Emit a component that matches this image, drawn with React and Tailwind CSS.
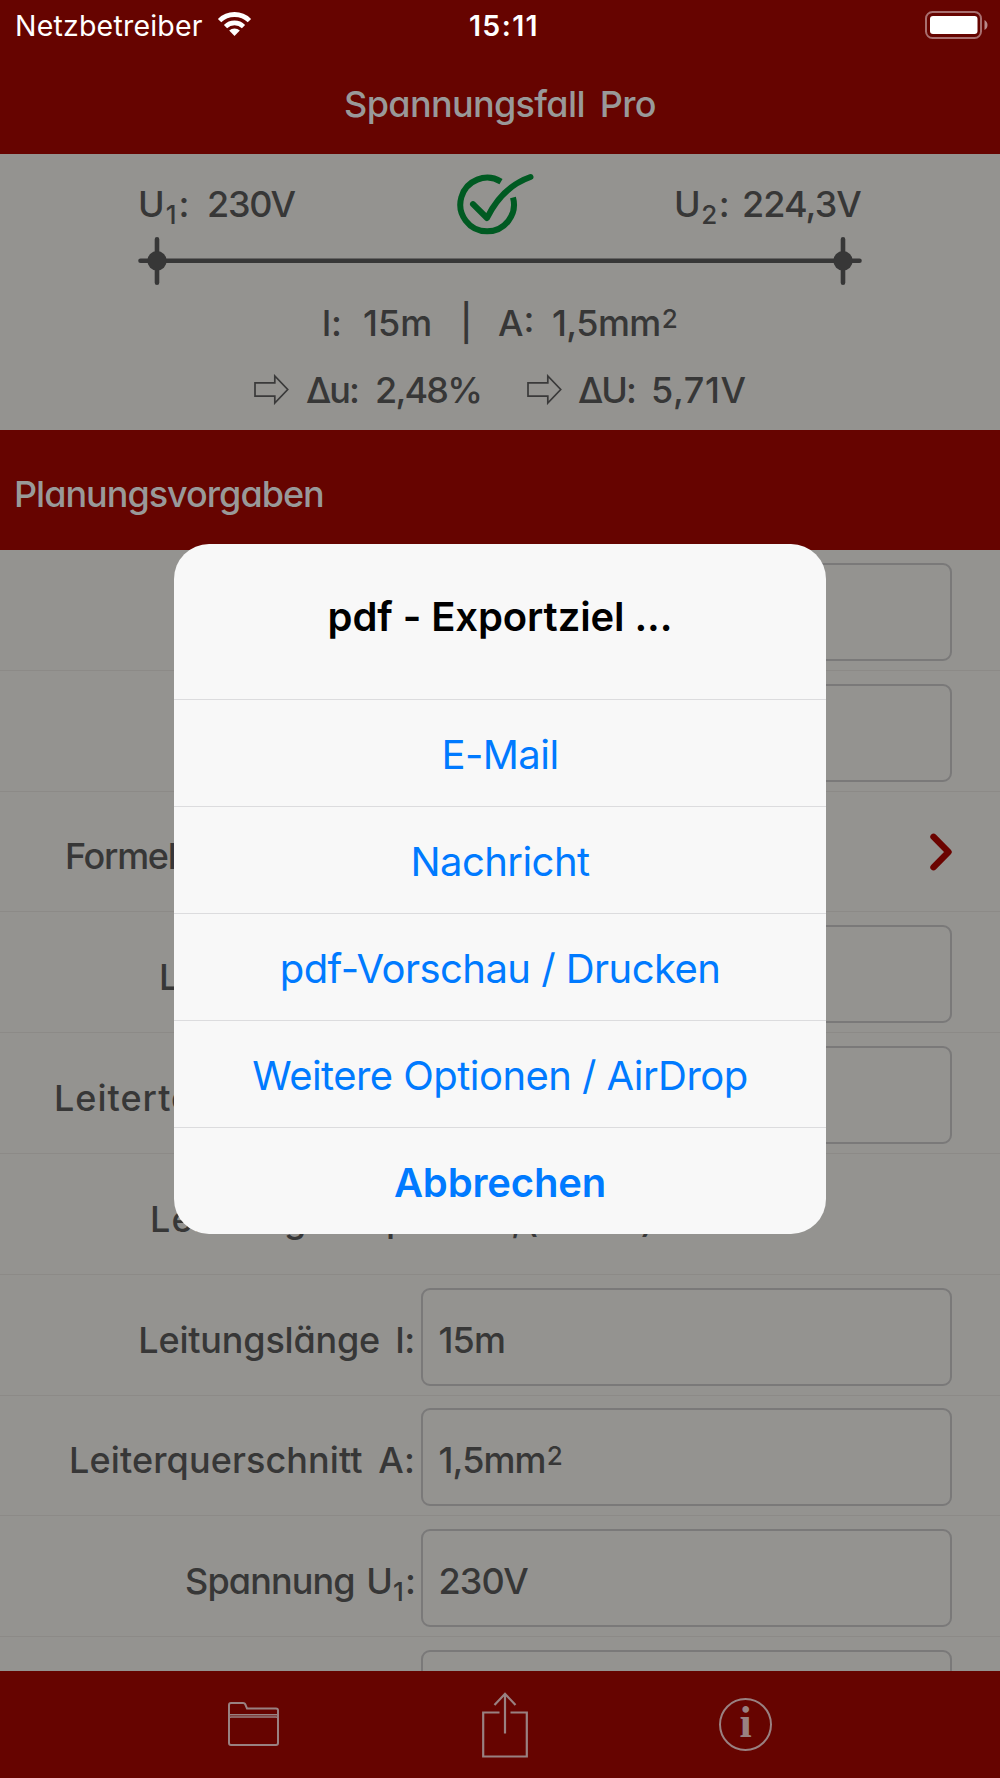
const rows = [
    { label: '', field: true, value: '' },
    { label: '', field: true, value: '' },
    { label: <span className="tracking-[-1.3px]">Formel</span>, align: 'justify-start pl-[65px]', link: true },
    { label: 'L', align: 'justify-start pl-[159px]', field: true, value: '' },
    { label: 'Leiterte', align: 'justify-start pl-[54px] tracking-[1px]', field: true, value: '' },
    {
        label: (
            <span className="flex">
                <span className="w-[236px] tracking-[1.2px]">Leistung</span>
                <span className="w-[139px]">pro km,</span>
                <span className="tracking-[-1.1px]">(Faktor)</span>
            </span>
        ),
        align: 'justify-start pl-[150px]',
    },
    { label: 'Leitungslänge l:', align: 'justify-end tracking-[-0.2px]', field: true, value: '15m' },
    { label: 'Leiterquerschnitt A:', align: 'justify-end tracking-[0.1px]', field: true, value: <>1,5mm<Sup>2</Sup></> },
    { label: <><span className="mr-[-3px]">Spannung</span> U<Sub>1</Sub>:</>, align: 'justify-end tracking-[-0.9px]', field: true, value: '230V' },
    { label: '', field: true, value: '' },
]

const options = ['E-Mail', 'Nachricht', 'pdf-Vorschau / Drucken', 'Weitere Optionen / AirDrop']

function Sub({ children }) {
    return <sub className="text-[26px] ml-[1px] mr-[2px]">{children}</sub>
}

function Sup({ children }) {
    return <sup className="text-[26px] -top-[8px] ml-[1px]">{children}</sup>
}

function StatusBar() {
    return (
        <div className="h-[50px] pt-[2px] px-[15px] flex items-center text-white text-[28.5px] relative">
            <span className="tracking-[0.2px]">Netzbetreiber</span>
            <svg className="ml-[14px] -mt-[4px]" width="35" height="26" viewBox="0 0 35 26" fill="none" stroke="#fff">
                <path d="M2.6 9.6a21.3 21.3 0 0 1 29.8 0" strokeWidth="4.8" />
                <path d="M8.5 15.6a12.8 12.8 0 0 1 18 0" strokeWidth="4.6" />
                <path d="M12.2 19.6a7.6 7.6 0 0 1 10.6 0L17.5 25z" fill="#fff" stroke="none" />
            </svg>
            <div className="absolute inset-x-0 text-center font-semibold tracking-[1.4px] pl-[8px]">15:11</div>
            <svg className="ml-auto -mr-[4px] -mt-[3px]" width="64" height="28" viewBox="0 0 64 28">
                <rect x="1" y="1" width="55" height="26" rx="6.5" fill="none" stroke="#a86f6f" strokeWidth="2" />
                <rect x="5" y="5" width="47.5" height="18" rx="3" fill="#fff" />
                <path d="M59.5 9v10c4-2 4-8 0-10z" fill="#b98a8a" />
            </svg>
        </div>
    )
}

function Arrow() {
    return (
        <svg className="-mt-px" width="36" height="31" viewBox="0.500 0 36 31" fill="none" stroke="#3a3a3a" strokeWidth="1.7">
            <path d="M1.500 8.8h19.8V2L34.2 15.5 21.3 29v-6.8H1.500z" />
        </svg>
    )
}

function Summary() {
    return (
        <div className="h-[276px] bg-[#949390] text-[#373737]">
            <div className="h-[83px] pt-[17px] pl-[138px] pr-[139px] flex items-center">
                <div className="w-[318px] flex items-center">
                    <span className="w-[69px]">U<Sub>1</Sub>:</span>
                    <span className="tracking-[-1.3px]">230V</span>
                </div>
                <svg width="78" height="62" viewBox="456 174 78 62" fill="none" stroke="#005a22" strokeWidth="6">
                    <path d="M501 182.6A26.8 26.8 0 1 0 513 198.5" />
                    <path d="M473 205.2L487 219Q502 188 530.5 178" strokeLinecap="round" strokeLinejoin="round" />
                </svg>
                <div className="ml-auto flex items-center">
                    <span className="w-[68px] tracking-[-0.5px]">U<Sub>2</Sub>:</span>
                    <span className="tracking-[-0.9px]">224,3V</span>
                </div>
            </div>
            <svg className="mx-auto block" width="724" height="48" viewBox="0 0 724 48" stroke="#373737" strokeWidth="4.6" strokeLinecap="round">
                <path d="M2.5 23.8H721.5M19 2.3V45.7M705 2.3V45.7" />
                <circle cx="19" cy="23.8" r="9.7" fill="#373737" stroke="none" />
                <circle cx="705" cy="23.8" r="9.7" fill="#373737" stroke="none" />
            </svg>
            <div className="h-[74px] pt-px pl-[322px] flex items-center">
                <span className="w-[41px]">l:</span>
                <span className="w-[97px]">15m</span>
                <span className="w-[38px]">|</span>
                <span className="w-[54px]">A:</span>
                <span className="tracking-[-0.6px]">1,5mm<Sup>2</Sup></span>
            </div>
            <div className="h-[61px] pt-px pl-[254px] flex items-center">
                <Arrow />
                <span className="w-[69px] ml-[16px] tracking-[-2px]">Δu:</span>
                <span className="w-[152px] tracking-[-1.8px]">2,48%</span>
                <Arrow />
                <span className="w-[73px] ml-[15px] tracking-[-2px]">ΔU:</span>
                <span className="tracking-[0.6px]">5,71V</span>
            </div>
        </div>
    )
}

function FormRow({ row }) {
    return (
        <div className="h-[120.8px] shrink-0 border-b border-[#8c8a87] flex items-start">
            <div className={`h-full w-[415px] pt-[10px] flex items-center whitespace-nowrap ${row.align || ''}`}>
                <span>{row.label}</span>
            </div>
            {row.field && (
                <div className="mt-[12.8px] ml-[5.5px] h-[98px] w-[531px] pl-[16px] pt-[6px] flex items-center rounded-[9px] border-2 border-[#7a7979] tracking-[-0.9px]">
                    <span>{row.value}</span>
                </div>
            )}
            {row.link && (
                <svg className="ml-auto mr-[48px] mt-[41px]" width="22" height="38" viewBox="0 0 22 38" fill="none" stroke="#6b0300" strokeWidth="6.4" strokeLinecap="round" strokeLinejoin="round">
                    <path d="M3.5 3.8L18.5 19L3.5 34.2" />
                </svg>
            )}
        </div>
    )
}

function Toolbar() {
    return (
        <div className="h-[107px] bg-[#660400] pl-[227px] flex items-center">
            <svg className="-mt-px" width="53" height="46" viewBox="0 0 53 46" fill="none" stroke="#998181" strokeWidth="2">
                <path d="M2 42V4q0-2 2-2h12q2 0 2.5 2l1.5 3.5H49q2 0 2 2V42q0 2-2 2H4q-2 0-2-2z" />
                <path d="M2 13.8H51M2 18q0-2 2-2H49q2 0 2 2" strokeWidth="1.6" />
            </svg>
            <svg className="ml-[201px]" width="48" height="66" viewBox="0 0 48 66" fill="none" stroke="#998181" strokeWidth="2.2">
                <path d="M18.5 20.5H2.2V64.5H45.8V20.5H29.5" />
                <path d="M24 41.5V2M13.5 13L24 1.8L34.5 13" />
            </svg>
            <div className="ml-[190px] w-[53px] h-[53px] rounded-full border-2 border-[#998181] flex items-center justify-center text-[#998181] font-['Liberation_Serif'] font-bold text-[44px] leading-none pb-[3px]">
                i
            </div>
        </div>
    )
}

function ExportDialog() {
    return (
        <div className="absolute inset-0 flex items-center justify-center">
            <div className="w-[652px] h-[690px] rounded-[35px] bg-[#f8f8f8] text-[40px] text-center overflow-hidden tracking-[-0.55px]">
                <div className="h-[155px] pb-[9px] flex items-center justify-center font-semibold text-black tracking-[-0.1px]">
                    pdf - Exportziel ...
                </div>
                {options.map((option) => (
                    <button key={option} className="block w-full h-[107px] pt-[3px] border-t border-[#dcdcde] text-[#007aff]">
                        {option}
                    </button>
                ))}
                <button className="block w-full h-[107px] pt-[3px] border-t border-[#dcdcde] text-[#007aff] font-semibold tracking-[-0.15px]">
                    Abbrechen
                </button>
            </div>
        </div>
    )
}

export default function App() {
    return (
        <div className="relative w-[1000px] h-[1778px] overflow-hidden bg-[#949390] font-['Inter',sans-serif] text-[36px] leading-none">
            <div className="bg-[#660400]">
                <StatusBar />
            </div>
            <div className="font-medium [font-feature-settings:'cv11'] [word-spacing:6px]">
                <div className="h-[104px] pt-[4px] bg-[#660400] text-[#999] flex items-center justify-center tracking-[-0.65px]">
                    Spannungsfall Pro
                </div>
                <Summary />
                <div className="h-[120px] pt-[8px] pl-[14px] bg-[#660400] text-[#999] flex items-center tracking-[-1px]">
                    Planungsvorgaben
                </div>
                <div className="h-[1121px] overflow-hidden flex flex-col text-[#373737]">
                    {rows.map((row, i) => <FormRow key={i} row={row} />)}
                </div>
                <Toolbar />
            </div>
            <ExportDialog />
        </div>
    )
}
